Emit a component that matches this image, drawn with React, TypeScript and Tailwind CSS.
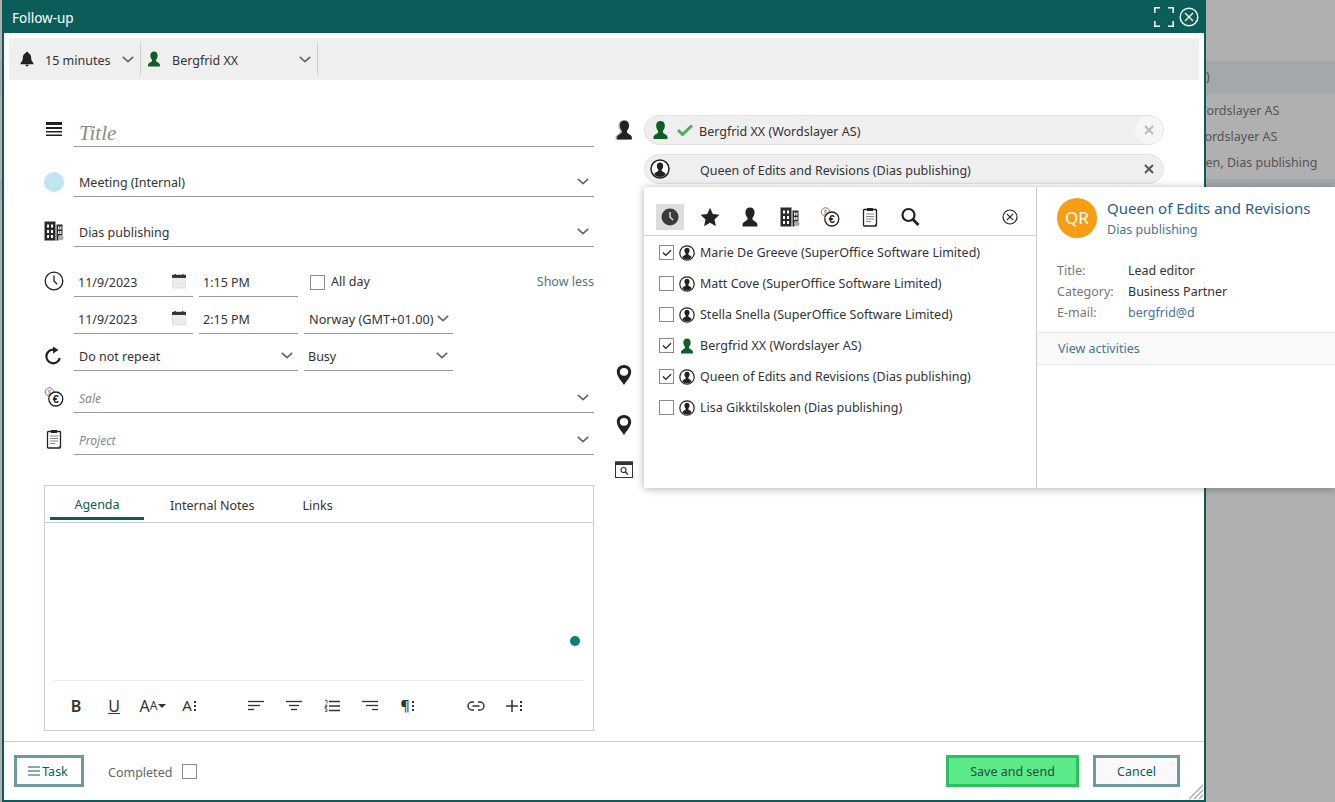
import React from 'react';

type IconProps = { className?: string };

const PERSON_D =
  'M10 .5c-3 0-4.600 2.100-4.600 5 0 2.200 1 4.300 2.100 5.300v1.500C7.500 14 2.600 14.500 2.600 17.600v1.900h14.800v-1.900c0-3.100-4.900-3.600-4.900-5.300v-1.500c1.100-1 2.100-3.100 2.100-5.300 0-2.900-1.600-5-4.600-5z';

const Chevron = ({ className = '' }: IconProps) => (
  <svg viewBox="0 0 12 7" className={`w-3 h-[7px] shrink-0 ${className}`} fill="none" stroke="#666" strokeWidth="1.600">
    <path d="M.8.8 6 5.600 11.200.8" />
  </svg>
);

const Person = ({ className = '' }: IconProps) => (
  <svg viewBox="0 0 20 20" className={className} fill="currentColor">
    <path d={PERSON_D} />
  </svg>
);

const CircledPerson = ({ className = '' }: IconProps) => (
  <svg viewBox="0 0 20 20" className={className}>
    <circle cx="10" cy="10" r="9" fill="#fff" stroke="#222" strokeWidth="1.500" />
    <path
      fill="#222"
      d="M10 3.500c-2 0-3.200 1.400-3.200 3.400 0 1.500.7 2.900 1.500 3.600v1C8.300 12.800 4.500 13 4.300 15.500 5.800 17 7.800 17.900 10 17.900s4.200-.9 5.700-2.400c-.2-2.500-4-2.700-4-4v-1c.8-.7 1.500-2.100 1.500-3.600 0-2-1.200-3.400-3.200-3.400z"
    />
  </svg>
);

const Building = ({ className = '' }: IconProps) => (
  <svg viewBox="0 0 20 20" className={className}>
    <path
      fill="#2b2b2b"
      fillRule="evenodd"
      d="M.5.5h11v19H.5zM3 3.500v3h2v-3zm4 0v3h2v-3zM3 9v3h2V9zm4 0v3h2V9zM3 14v3h2v-3zm4 0v3h2v-3z"
    />
    <path fill="#2b2b2b" fillRule="evenodd" d="M12.500 3.500h6v11h-6zM14 5.500v3h1.500v-3zm2.200 0v3h1.300v-3zM14 10v3h1.500v-3zm2.200 0v3h1.300v-3z" />
    <path fill="#2b2b2b" d="M12.500 14h2v5.500h-2z" />
    <circle cx="17" cy="16.800" r="2.500" fill="#aaa" />
  </svg>
);

const Sale = ({ className = '' }: IconProps) => (
  <svg viewBox="0 0 20 20" className={className}>
    <circle cx="5.500" cy="5" r="4.200" fill="#fff" stroke="#777" strokeWidth="1" />
    <text x="5.500" y="7.500" textAnchor="middle" fontSize="6.500" fill="#777" fontFamily="Liberation Sans, sans-serif">
      $
    </text>
    <circle cx="11.800" cy="12" r="7" fill="#fff" stroke="#222" strokeWidth="1.300" />
    <text x="11.800" y="15.800" textAnchor="middle" fontSize="11" fontWeight="700" fill="#222" fontFamily="Liberation Sans, sans-serif">
      €
    </text>
  </svg>
);

const Clipboard = ({ className = '' }: IconProps) => (
  <svg viewBox="0 0 20 20" className={className} fill="none">
    <rect x="3.500" y="2.500" width="13" height="16.500" rx=".8" stroke="#222" strokeWidth="1.300" />
    <rect x="7" y="1" width="6" height="3" fill="#222" />
    <path d="M6 7h8M6 9.500h8M6 12h8M6 14.500h5" stroke="#888" strokeWidth="1" />
    <path d="M13.500 19 16.500 16v3z" fill="#444" />
  </svg>
);

const Pin = ({ className = '' }: IconProps) => (
  <svg viewBox="0 0 20 20" className={className}>
    <path
      fill="#222"
      fillRule="evenodd"
      d="M10 0C5.600 0 2.800 3 2.800 6.800c0 4.500 4.900 9.800 7.200 13.200 2.300-3.400 7.200-8.700 7.200-13.200C17.200 3 14.400 0 10 0zm0 3c2.500 0 4.200 1.700 4.200 3.900S12.500 10.800 10 10.800 5.800 9.100 5.800 6.900 7.500 3 10 3z"
    />
  </svg>
);

const CloseCircle = ({ className = '', color = '#222' }: IconProps & { color?: string }) => (
  <svg viewBox="0 0 20 20" className={className} fill="none" stroke={color} strokeWidth="1.400">
    <circle cx="10" cy="10" r="8.800" />
    <path d="m6 6 8 8M14 6l-8 8" />
  </svg>
);

const CalendarSmall = ({ className = '' }: IconProps) => (
  <svg viewBox="0 0 16 16" className={className}>
    <rect x=".5" y="1" width="15" height="15" fill="#ececec" stroke="#ddd" />
    <rect x="0" y="1" width="16" height="3.500" fill="#333" />
    <rect x="3" y="0" width="1.500" height="2" fill="#333" />
    <rect x="11.500" y="0" width="1.500" height="2" fill="#333" />
  </svg>
);

const CheckBox = ({ checked = false }: { checked?: boolean }) => (
  <span className="w-[15px] h-[15px] shrink-0 border border-[#8a8a8a] bg-white flex items-center justify-center">
    {checked && (
      <svg viewBox="0 0 12 10" className="w-[10px] h-2" fill="none" stroke="#222" strokeWidth="1.700">
        <path d="M1 4.500 4.500 8 11 1.500" />
      </svg>
    )}
  </span>
);

// one row on the left of the form: icon column + underlined field
const FormRow = ({ icon, className = '', children }: { icon?: React.ReactNode; className?: string; children: React.ReactNode }) => (
  <div className={`flex items-end h-[30px] ${className}`}>
    <div className="w-[30px] h-[30px] shrink-0 flex items-center">{icon}</div>
    {children}
  </div>
);

const Field = ({ className = '', children }: { className?: string; children: React.ReactNode }) => (
  <div className={`flex items-center justify-between h-[30px] border-b border-[#999] pl-[5px] pr-[5px] [&>span]:pt-[3px] ${className}`}>{children}</div>
);

const people = [
  { name: 'Marie De Greeve (SuperOffice Software Limited)', checked: true },
  { name: 'Matt Cove (SuperOffice Software Limited)', checked: false },
  { name: 'Stella Snella (SuperOffice Software Limited)', checked: false },
  { name: 'Bergfrid XX (Wordslayer AS)', checked: true, self: true },
  { name: 'Queen of Edits and Revisions (Dias publishing)', checked: true },
  { name: 'Lisa Gikktilskolen (Dias publishing)', checked: false },
];

const EditorTool = ({ className = '', children }: { className?: string; children: React.ReactNode }) => (
  <span className={`flex items-center justify-center h-5 text-[#333] ${className}`}>{children}</span>
);

const Lines = ({ rows }: { rows: [number, number][] }) => (
  <svg viewBox="0 0 16 12" className="w-4 h-3" stroke="#333" strokeWidth="1.300">
    {rows.map(([x1, x2], i) => (
      <line key={i} x1={x1} x2={x2} y1={1.5 + i * 4} y2={1.5 + i * 4} />
    ))}
  </svg>
);

const Dots = () => (
  <span className="flex flex-col gap-[2px] ml-[2px]">
    <span className="w-[2px] h-[2px] bg-[#333]" />
    <span className="w-[2px] h-[2px] bg-[#333]" />
    <span className="w-[2px] h-[2px] bg-[#333]" />
  </span>
);

export default function App() {
  return (
    <div className="relative w-[1335px] h-[802px] overflow-hidden bg-[#b0b0b0] font-['Noto_Sans',sans-serif] text-[12.500px] text-[#333]">
      {/* page behind the dialog */}
      <div className="pt-[61px] text-[#555]">
        <div className="h-[33px] bg-[#a3a8ab] flex items-center pl-[1195px]">(0)</div>
        <div className="pt-[4px] flex flex-col">
          <span className="h-[26px] flex items-center pl-[1195px]">Wordslayer AS</span>
          <span className="h-[26px] flex items-center pl-[1193px]">Wordslayer AS</span>
          <span className="h-[26px] flex items-center pl-[1181px]">Queen, Dias publishing</span>
        </div>
        <div className="h-[20px] mt-[3px] bg-[#a3a8ab]" />
      </div>

      {/* dialog window */}
      <div className="absolute left-[2px] top-0 w-[1204px] h-[802px] bg-white border-x-2 border-b-2 border-[#0a5d59] flex flex-col">
        <div className="h-[33px] shrink-0 bg-[#0a5d59] flex items-center justify-between pl-[8px] pr-[5px] text-white text-[13.500px]">
          <span className="pt-[3px]">Follow-up</span>
          <div className="flex items-center gap-[5px]">
            <svg viewBox="0 0 20 20" className="w-5 h-5" fill="none" stroke="#fff" strokeWidth="1.500">
              <path d="M.8 6V.8H6M14 .8h5.200V6M19.200 14v5.200H14M6 19.200H.8V14" />
            </svg>
            <CloseCircle className="w-5 h-5" color="#fff" />
          </div>
        </div>

        <div className="h-[42px] mt-[5px] mx-[5px] shrink-0 bg-[#efefef] flex items-center">
          <div className="w-[132px] h-8 border-r border-[#c8cfcf] flex items-center pl-[11px] pr-[6px]">
            <svg viewBox="0 0 20 20" className="w-4 h-4 shrink-0 -ml-[1px]" fill="#222">
              <path d="M10 1a1.500 1.500 0 0 0-1.500 1.500C6 3.300 4.800 5.500 4.800 8.500c0 3.200-1.200 5-2.800 6.500v1.500h16V15c-1.600-1.500-2.800-3.300-2.800-6.500 0-3-1.200-5.200-3.700-6A1.500 1.500 0 0 0 10 1zM8 17.300a2 2 0 0 0 4 0z" />
            </svg>
            <span className="ml-[10px] flex-1 pt-[5px]">15 minutes</span>
            <Chevron />
          </div>
          <div className="w-[177px] h-8 border-r border-[#c8cfcf] flex items-center pl-[5px] pr-[6px]">
            <Person className="w-4 h-4 text-[#0c5f25] shrink-0" />
            <span className="ml-[10px] flex-1 pt-[5px]">Bergfrid XX</span>
            <Chevron />
          </div>
        </div>

        <div className="flex-1 flex items-start pl-[40px] min-h-0">
          {/* left column */}
          <div className="w-[550px] shrink-0 pt-[37px]">
            <FormRow
              icon={
                <svg viewBox="0 0 16 16" className="w-4 h-4 ml-[2px] -mt-[4px]" fill="#222">
                  <rect x="0" y="0" width="16" height="3" />
                  <rect x="0" y="5" width="16" height="2" />
                  <rect x="0" y="9" width="16" height="1.500" />
                  <rect x="0" y="12.500" width="16" height="1.500" />
                </svg>
              }
            >
              <Field className="flex-1 font-['Liberation_Serif',serif] italic text-[21px] text-[#8a8a8a]">
                <span className="!pt-[5px]">Title</span>
              </Field>
            </FormRow>
            <FormRow className="mt-5" icon={<span className="w-5 h-5 rounded-full bg-[#bbe6f2]" />}>
              <Field className="flex-1">
                <span>Meeting (Internal)</span>
                <Chevron />
              </Field>
            </FormRow>
            <FormRow className="mt-5" icon={<Building className="w-5 h-5 -mt-[2px]" />}>
              <Field className="flex-1">
                <span>Dias publishing</span>
                <Chevron />
              </Field>
            </FormRow>

            <FormRow
              className="mt-5"
              icon={
                <svg viewBox="0 0 20 20" className="w-5 h-5 -mt-[3px]" fill="none" stroke="#222" strokeWidth="1.300">
                  <circle cx="10" cy="10" r="8.800" />
                  <path d="M10 4.500V10l3.200 3.200" />
                </svg>
              }
            >
              <Field className="w-[119px] !pl-[4px] !pr-[7px]">
                <span>11/9/2023</span>
                <CalendarSmall className="w-[14px] h-[16px] -mt-[2px]" />
              </Field>
              <Field className="w-[99px] ml-[6px] !pl-[4px]">
                <span>1:15 PM</span>
              </Field>
              <div className="flex-1 h-[30px] flex items-center ml-[12px]">
                <CheckBox />
                <span className="ml-[6px] flex-1">All day</span>
                <span className="text-[#4a7391]">Show less</span>
              </div>
            </FormRow>
            <FormRow className="mt-[7px]">
              <Field className="w-[119px] !pl-[4px] !pr-[7px]">
                <span>11/9/2023</span>
                <CalendarSmall className="w-[14px] h-[16px] -mt-[2px]" />
              </Field>
              <Field className="w-[99px] ml-[6px] !pl-[4px]">
                <span>2:15 PM</span>
              </Field>
              <Field className="w-[149px] ml-[6px] !pr-[4px]">
                <span className="whitespace-nowrap text-[12.700px]">Norway (GMT+01.00)</span>
                <Chevron />
              </Field>
            </FormRow>
            <FormRow
              className="mt-[7px]"
              icon={
                <svg viewBox="0 0 20 20" className="w-5 h-5" fill="none" stroke="#222" strokeWidth="2.200">
                  <path d="M15.800 12a6.800 6.800 0 1 1-6-8.300" />
                  <path d="M9 .5 14.500 4 9 7.500z" fill="#222" stroke="none" />
                </svg>
              }
            >
              <Field className="w-[224px]">
                <span>Do not repeat</span>
                <Chevron />
              </Field>
              <Field className="w-[149px] ml-[6px] !pl-[4px]">
                <span>Busy</span>
                <Chevron />
              </Field>
            </FormRow>
            <FormRow className="mt-3" icon={<Sale className="w-5 h-5 -mt-[2px]" />}>
              <Field className="flex-1 italic text-[12px] text-[#888]">
                <span>Sale</span>
                <Chevron />
              </Field>
            </FormRow>
            <FormRow className="mt-3" icon={<Clipboard className="w-5 h-5 -mt-[2px]" />}>
              <Field className="flex-1 italic text-[12px] text-[#888]">
                <span>Project</span>
                <Chevron />
              </Field>
            </FormRow>

            {/* editor */}
            <div className="relative h-[246px] mt-[30px] border border-[#c8cfcf] flex flex-col">
              <div className="h-[37px] shrink-0 border-b border-[#c8cfcf] flex items-end pl-[5px]">
                <div className="w-[94px] h-[31px] pt-[5px] border-b-[3px] border-[#0a5d59] flex items-center justify-center text-[#0a5d59] mb-[2px]">
                  Agenda
                </div>
                <div className="ml-[26px] h-[33px] flex items-center pt-[1px]">Internal Notes</div>
                <div className="ml-[48px] h-[33px] flex items-center pt-[1px]">Links</div>
              </div>
              <div className="flex-1" />
              <span className="absolute left-[525px] top-[150px] w-[10px] h-[10px] rounded-full bg-[#0a7f7a]" />
              <div className="h-[50px] mx-[9px] border-t border-[#eaeaea] flex items-center pl-[15px] shrink-0">
                <EditorTool className="w-[14px] font-semibold text-[16px]">B</EditorTool>
                <EditorTool className="w-[14px] ml-[24px] text-[16px] underline">U</EditorTool>
                <EditorTool className="w-[28px] ml-[18px]">
                  <span className="text-[16px]">A</span>
                  <span className="text-[12px]">A</span>
                  <span className="ml-[1px] border-x-[4px] border-t-[4px] border-x-transparent border-t-[#333]" />
                </EditorTool>
                <EditorTool className="w-[16px] ml-[14px]">
                  <span className="text-[15px]">A</span>
                  <Dots />
                </EditorTool>
                <span className="ml-[51px]">
                  <Lines rows={[[0, 16], [0, 12], [0, 6]]} />
                </span>
                <span className="ml-[22px]">
                  <Lines rows={[[0, 16], [3, 13], [5, 11]]} />
                </span>
                <span className="ml-[22px] relative">
                  <svg viewBox="0 0 16 12" className="w-4 h-3" stroke="#333" strokeWidth="1.300">
                    <path d="M5 1.500h11M5 6h11M5 10.500h11" />
                    <path d="M1 .5h2v3M1 5h2v1.500H1V8h2M1 9h2v2.500H1" strokeWidth=".8" fill="none" />
                  </svg>
                </span>
                <span className="ml-[22px]">
                  <Lines rows={[[0, 16], [4, 16], [10, 16]]} />
                </span>
                <EditorTool className="ml-[21px] w-[16px]">
                  <span className="font-semibold text-[14px]">¶</span>
                  <Dots />
                </EditorTool>
                <svg viewBox="0 0 18 10" className="w-[18px] h-[10px] ml-[52px]" fill="none" stroke="#333" strokeWidth="1.500">
                  <path d="M7 1H5a4 4 0 0 0 0 8h2M11 1h2a4 4 0 0 1 0 8h-2M5.500 5h7" />
                </svg>
                <EditorTool className="ml-[21px] w-[16px]">
                  <svg viewBox="0 0 12 12" className="w-3 h-3" stroke="#333" strokeWidth="1.500">
                    <path d="M6 0v12M0 6h12" />
                  </svg>
                  <Dots />
                </EditorTool>
              </div>
            </div>
          </div>

          {/* right column */}
          <div className="w-[550px] ml-[20px] pt-[35px] flex flex-col">
            <div className="flex items-center">
              <svg viewBox="0 0 21 20" className="w-[21px] h-5 mr-[10px] -ml-[1px]">
                <path d={PERSON_D} fill="#aaa" />
                <path d={PERSON_D} fill="#222" transform="translate(1.500 0)" />
              </svg>
              <div className="flex-1 h-[30px] rounded-full bg-[#efefef] border border-[#e2e2e2] flex items-center pl-[6px]">
                <Person className="w-[19px] h-5 text-[#0c5f25]" />
                <svg viewBox="0 0 16 12" className="w-4 h-3 ml-[7px]" fill="none" stroke="#56a85f" strokeWidth="3">
                  <path d="M1 6l4.500 4.500L15 1.500" />
                </svg>
                <span className="ml-[6px] flex-1 pt-[5px]">Bergfrid XX (Wordslayer AS)</span>
                <span className="w-[28px] h-[28px] rounded-full bg-[#f6f6f6] flex items-center justify-center">
                  <svg viewBox="0 0 10 10" className="w-[10px] h-[10px]" stroke="#bbb" strokeWidth="2">
                    <path d="m1 1 8 8M9 1 1 9" />
                  </svg>
                </span>
              </div>
            </div>
            <div className="ml-[30px] mt-[9px] h-[30px] rounded-full bg-[#efefef] border border-[#e2e2e2] flex items-center pl-[5px]">
              <CircledPerson className="w-5 h-5" />
              <span className="ml-[30px] flex-1 pt-[5px]">Queen of Edits and Revisions (Dias publishing)</span>
              <span className="w-[28px] h-[28px] flex items-center justify-center">
                <svg viewBox="0 0 10 10" className="w-[10px] h-[10px]" stroke="#555" strokeWidth="2">
                  <path d="m1 1 8 8M9 1 1 9" />
                </svg>
              </span>
            </div>
            <Pin className="w-5 h-5 mt-[181px]" />
            <Pin className="w-5 h-5 mt-[30px]" />
            <svg viewBox="0 0 18 18" className="w-[18px] h-[18px] ml-[1px] mt-[25px]" fill="none">
              <rect x=".5" y="2" width="17" height="15.500" stroke="#333" />
              <rect x="0" y="1.500" width="18" height="3.500" fill="#333" />
              <circle cx="8.500" cy="10" r="2.500" stroke="#333" strokeWidth="1.200" />
              <path d="m10.500 12 2.500 2.500" stroke="#333" strokeWidth="1.500" />
            </svg>
          </div>
        </div>

        <div className="h-[59px] shrink-0 border-t border-[#c8cfcf] flex items-center px-[10px]">
          <button className="w-[70px] h-[32px] border-[3px] border-[#6f9a9a] bg-white flex items-center justify-center text-[#0a5d59] pt-[3px] pr-[2px]">
            <svg viewBox="0 0 12 10" className="w-3 h-[10px] mr-[2px] -mt-[3px]" stroke="#0a5d59" strokeWidth="1.200">
              <path d="M0 1h12M0 5h12M0 9h12" />
            </svg>
            Task
          </button>
          <span className="ml-6 text-[#666] pt-[4px]">Completed</span>
          <span className="ml-[10px]">
            <CheckBox />
          </span>
          <button className="ml-auto w-[133px] h-[32px] border-[3px] border-[#2bbf5e] bg-[#5aea8a] text-[#24503a] pt-[3px]">Save and send</button>
          <button className="ml-[14px] mr-[14px] w-[87px] h-[32px] border-[3px] border-[#6f9a9a] bg-[#f9f9f9] text-[#0a5d59] pt-[3px]">Cancel</button>
        </div>

        <svg viewBox="0 0 16 16" className="absolute right-0 bottom-0 w-4 h-4" stroke="#aaa" strokeWidth="1.300">
          <path d="M1 15 15 1M6 15l9-9M11 15l4-4" />
        </svg>
      </div>

      {/* participant picker popup */}
      <div className="absolute left-[644px] top-[187px] w-[691px] h-[301px] bg-white shadow-[0_1px_8px_rgba(0,0,0,0.3)] flex">
        <div className="w-[393px] shrink-0 border-r border-[#ccc] flex flex-col">
          <div className="h-[49px] shrink-0 border-b border-[#ccd2d2] flex items-center pt-[11px] pl-[12px] pr-[18px]">
            <span className="w-[28px] h-[26px] bg-[#ddd] flex items-center justify-center">
              <svg viewBox="0 0 18 18" className="w-[18px] h-[18px]">
                <circle cx="9" cy="9" r="8.500" fill="#3a3a3a" />
                <path d="M9 4v5l3 3" fill="none" stroke="#ddd" strokeWidth="1.500" />
              </svg>
            </span>
            <svg viewBox="0 0 20 20" className="w-5 h-5 ml-[16px]" fill="#222">
              <path d="m10 .8 2.800 6.300 6.700.7-5 4.600 1.400 6.800-5.900-3.500-5.900 3.500 1.400-6.800-5-4.600 6.700-.7z" />
            </svg>
            <Person className="w-5 h-5 ml-[20px] text-[#222]" />
            <Building className="w-5 h-5 ml-[20px]" />
            <Sale className="w-5 h-5 ml-[20px]" />
            <Clipboard className="w-5 h-5 ml-[20px]" />
            <svg viewBox="0 0 20 20" className="w-5 h-5 ml-[20px]" fill="none" stroke="#222" strokeWidth="2.200">
              <circle cx="8.500" cy="8" r="6" />
              <path d="m13 12.500 5.500 5.500" strokeWidth="3" />
            </svg>
            <CloseCircle className="w-4 h-4 ml-auto" />
          </div>
          <div className="pt-[1px] pl-[15px]">
            {people.map((p) => (
              <div key={p.name} className="h-[31px] flex items-center">
                <CheckBox checked={p.checked} />
                {p.self ? (
                  <Person className="w-4 h-4 ml-[5px] text-[#0c5f25]" />
                ) : (
                  <CircledPerson className="w-4 h-4 ml-[5px]" />
                )}
                <span className="ml-[5px] whitespace-nowrap pt-[2px]">{p.name}</span>
              </div>
            ))}
          </div>
        </div>
        <div className="flex-1">
          <div className="flex pt-[11px] pl-[20px]">
            <span className="w-10 h-10 rounded-full bg-[#f59e14] text-white text-[17px] flex items-center justify-center">QR</span>
            <div className="ml-[10px] flex flex-col">
              <span className="text-[#2c5c8c] text-[15px] leading-[20px]">Queen of Edits and Revisions</span>
              <span className="text-[#4a7391] leading-[20px] mt-[2px]">Dias publishing</span>
            </div>
          </div>
          <div className="pl-[20px] pt-[21px] grid grid-cols-[71px_1fr] auto-rows-[21px] items-center">
            <span className="text-[#777]">Title:</span>
            <span>Lead editor</span>
            <span className="text-[#777]">Category:</span>
            <span>Business Partner</span>
            <span className="text-[#777]">E-mail:</span>
            <span className="text-[#4a7391]">bergfrid@d</span>
          </div>
          <div className="h-[33px] mt-[8px] bg-[#f9f9f9] border-y border-[#e8e8e8] flex items-center pl-[21px] pt-[2px] text-[#4a7391]">View activities</div>
        </div>
      </div>
    </div>
  );
}
